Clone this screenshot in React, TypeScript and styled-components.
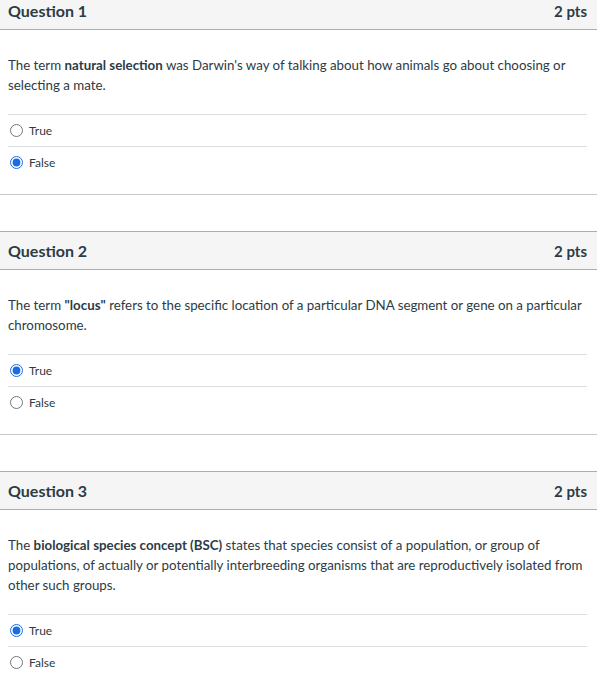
import styled, { createGlobalStyle } from "styled-components";
import { ReactNode } from "react";

const GlobalStyle = createGlobalStyle`
  html, body {
    margin: 0;
    padding: 0;
    background: #ffffff;
  }
  body {
    font-family: Lato, "Noto Sans", sans-serif;
    color: #2d3b45;
    overflow: hidden;
  }
`;

const Page = styled.div`
  margin-top: -9px;
  display: flex;
  flex-direction: column;
  gap: 36px;
`;

const Card = styled.section`
  border-bottom: 1px solid #c4c8cb;
`;

const Header = styled.header`
  height: 37px;
  display: flex;
  align-items: center;
  justify-content: space-between;
  padding: 0 10px 0 8px;
  background: #f5f5f5;
  border-top: 1px solid #a9adb0;
  border-bottom: 1px solid #a9adb0;
`;

const Title = styled.h2`
  margin: 0;
  font-size: 16px;
  font-weight: 700;
`;

const Points = styled.span`
  font-size: 15px;
  font-weight: 700;
`;

const Body = styled.div`
  padding: 25px 10px 16px 8px;
`;

const Text = styled.p`
  margin: 0 0 19px;
  font-size: 13.3px;
  line-height: 20px;
  b {
    font-weight: 700;
  }
`;

const Answers = styled.div`
  display: flex;
  flex-direction: column;
`;

const Answer = styled.label`
  height: 31px;
  display: flex;
  align-items: center;
  gap: 6px;
  border-top: 1px solid #dcdfe1;
  font-size: 12px;
`;

const Radio = styled.input.attrs({ type: "radio" })`
  width: 13px;
  height: 13px;
  margin: 0 0 0 2px;
  accent-color: #1a6de0;
`;

interface QuestionProps {
  num: number;
  children: ReactNode;
  answer: boolean;
}

function Question({ num, children, answer }: QuestionProps) {
  return (
    <Card>
      <Header>
        <Title>Question {num}</Title>
        <Points>2 pts</Points>
      </Header>
      <Body>
        <Text>{children}</Text>
        <Answers>
          <Answer>
            <Radio name={`q${num}`} checked={answer} readOnly />
            True
          </Answer>
          <Answer>
            <Radio name={`q${num}`} checked={!answer} readOnly />
            False
          </Answer>
        </Answers>
      </Body>
    </Card>
  );
}

export default function App() {
  return (
    <>
      <GlobalStyle />
      <Page>
        <Question num={1} answer={false}>
          The term <b>natural selection</b> was Darwin's way of talking about how animals go about
          choosing or selecting a mate.
        </Question>
        <Question num={2} answer={true}>
          The term <b>"locus"</b> refers to the specific location of a particular DNA segment or
          gene on a particular chromosome.
        </Question>
        <Question num={3} answer={true}>
          The <b>biological species concept (BSC)</b> states that species consist of a population,
          or group of populations, of actually or potentially interbreeding organisms that are
          reproductively isolated from other such groups.
        </Question>
      </Page>
    </>
  );
}
